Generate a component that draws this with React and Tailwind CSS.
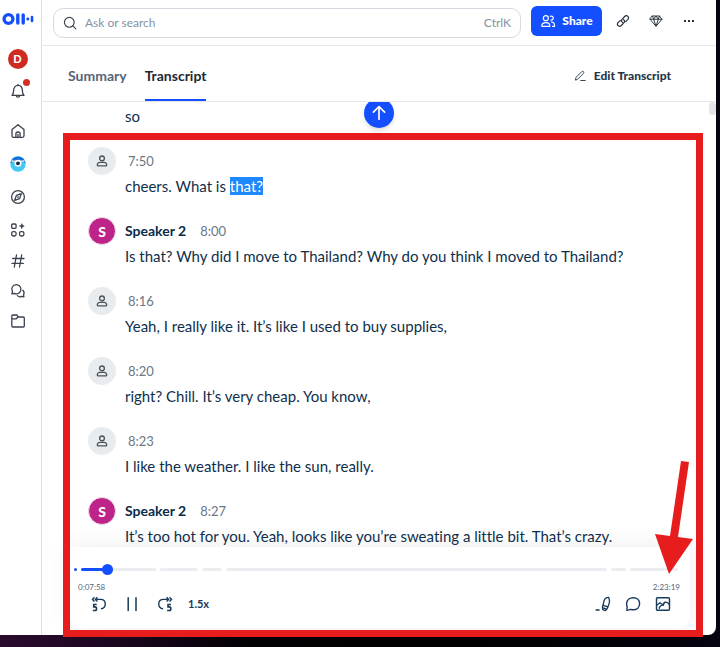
import React, { useState } from 'react';
import clsx from 'clsx';

const segments = [
    { time: '7:50', before: 'cheers. What is ', selected: 'that?' },
    { time: '8:00', speaker: 'Speaker 2', before: 'Is that? Why did I move to Thailand? Why do you think I moved to Thailand?' },
    { time: '8:16', before: 'Yeah, I really like it. It’s like I used to buy supplies,' },
    { time: '8:20', before: 'right? Chill. It’s very cheap. You know,' },
    { time: '8:23', before: 'I like the weather. I like the sun, really.' },
    { time: '8:27', speaker: 'Speaker 2', before: 'It’s too hot for you. Yeah, looks like you’re sweating a little bit. That’s crazy.' },
];

// Track chapters, sized in proportion to their length
const chapters = [75, 38, 20, 382, 15, 48];

const Icon = ({ size = 16, width = 1.3, children }) => (
    <svg
        width={size}
        height={size}
        viewBox="0 0 16 16"
        fill="none"
        stroke="currentColor"
        strokeWidth={width}
        strokeLinecap="round"
        strokeLinejoin="round"
        aria-hidden="true"
    >
        {children}
    </svg>
);

const Logo = () => (
    <svg width="32" height="14" viewBox="0 0 32 14" fill="none" stroke="#144fff" strokeLinecap="round" aria-hidden="true">
        <circle cx="6.5" cy="7" r="4.4" strokeWidth="3.4" />
        <path d="M15.8 3v8M21.2 3v8" strokeWidth="3.4" />
        <path d="M25.8 6.8v.4" strokeWidth="2.8" />
        <path d="M30 5v4" strokeWidth="2.6" />
    </svg>
);

const BellIcon = () => (
    <Icon>
        <path d="M2 12.3c1.2-1 1.6-2.3 1.6-4.6C3.6 4.5 5.4 2.3 8 2.3s4.4 2.2 4.4 5.4c0 2.3.4 3.6 1.6 4.6z" />
        <path d="M6.2 12.6c.2 1 .9 1.6 1.8 1.6s1.6-.6 1.8-1.6M8 1.5v.8" />
    </Icon>
);

const HomeIcon = () => (
    <Icon>
        <path d="M2 6.6 8 1.7l6 4.9v6.2c0 .9-.6 1.5-1.5 1.5h-9c-.9 0-1.5-.6-1.5-1.5z" />
        <path d="M5.9 14.2V11c0-1.2.8-2 2.1-2s2.1.8 2.1 2v3.2M8 11.5v2.7" />
    </Icon>
);

const OwlIcon = () => (
    <svg width="16" height="16" viewBox="0 0 16 16" aria-hidden="true">
        <circle cx="8" cy="8" r="7.7" fill="#45c8f3" />
        <path d="M.4 7A7.7 7.7 0 0 1 15.6 7C13 6 11 5 8 5S3 6 .4 7z" fill="#1670d8" />
        <path d="M1.5 4.6c1.5.6 2.7.8 4.1.3M14.5 4.6c-1.5.6-2.7.8-4.1.3" stroke="#fff" strokeWidth="1.2" />
        <circle cx="8" cy="7.3" r="3.5" fill="#fff" />
        <circle cx="8" cy="7.3" r="1.9" fill="#14283f" />
    </svg>
);

const CompassIcon = () => (
    <Icon>
        <circle cx="8" cy="8" r="6.4" />
        <path d="m11.3 4.7-1.7 4.9-4.9 1.7 1.7-4.9zM7.8 8.2l.4-.4" />
    </Icon>
);

const AppsIcon = () => (
    <Icon>
        <rect x="1.7" y="2" width="4.4" height="4.4" rx="1.1" />
        <rect x="1.7" y="9.6" width="4.4" height="4.4" rx="1.7" />
        <rect x="9.5" y="9.6" width="4.4" height="4.4" rx="1.7" />
        <path d="M11.8 2.3v3.6M10 4.1h3.6" strokeWidth="1.5" />
    </Icon>
);

const HashIcon = () => (
    <Icon>
        <path d="M6.5 2 4.3 14M11.7 2 9.5 14M2.7 5.5h11.3M2 10.4h11.3" />
    </Icon>
);

const ChatsIcon = () => (
    <Icon>
        <path d="M6.3 1.7a4.6 4.6 0 1 1-2.1 8.7l-2.3.5.6-2.2A4.5 4.5 0 0 1 6.3 1.7z" />
        <path d="M12.8 7.3a3.7 3.7 0 0 1 .8 4.5l.3 2-2.1-.4a4 4 0 0 1-4.5-.8" />
    </Icon>
);

const FolderIcon = () => (
    <Icon>
        <path d="M1.8 3c0-.6.4-1 1-1h4l1.5 2h5c.6 0 1 .4 1 1v8c0 .6-.4 1-1 1H2.8c-.6 0-1-.4-1-1zM2 5.8h4.2L8 4" />
    </Icon>
);

const SearchIcon = () => (
    <Icon size={14}>
        <circle cx="7.2" cy="7.2" r="5.6" />
        <path d="m11.3 11.3 3.4 3.4" />
    </Icon>
);

const PeopleIcon = () => (
    <Icon width={1.2}>
        <circle cx="5.8" cy="5.2" r="2.5" />
        <path d="M1.8 13.3c-.2-2.4 1.2-3.7 4-3.7s4.2 1.3 4 3.7z" />
        <path d="M10.3 3.3a2 2 0 1 1 .6 3.7M11.2 9c2.4 0 3.6 1.6 3.3 4.3h-2" />
    </Icon>
);

const LinkIcon = () => (
    <Icon size={14} width={1.4}>
        <path d="M7.3 9.5c-1.3-.8-1.5-2.3-.4-3.4l3-3.2c2.6-2.6 6 .9 3.5 3.5L11 8.7" />
        <path d="M8.7 6.5c1.3.8 1.5 2.3.4 3.4l-3 3.2c-2.6 2.6-6-.9-3.5-3.5L5 7.3" />
    </Icon>
);

const DiamondIcon = () => (
    <Icon size={14} width={1.1}>
        <path d="M4 2.3h8L14.8 6 8 14 1.2 6zM1.2 6h13.6M5.4 6 8 14l2.6-8M4 2.3 5.4 6 8 2.3 10.6 6 12 2.3" />
    </Icon>
);

const PencilIcon = () => (
    <Icon size={12} width={1.2}>
        <path d="m2 13 .8-3.3 7.5-7.5c1.6-1.4 3.7.6 2.3 2.3L5 12.2zM9 14h6" />
    </Icon>
);

const PersonIcon = () => (
    <Icon size={14} width={1.5}>
        <circle cx="8" cy="5" r="2.7" />
        <path d="M3.3 13.5c-1.2 0-.8-4 2.2-4h5c3 0 3.4 4 2.2 4z" />
    </Icon>
);

const Back5Icon = () => (
    <svg width="16" height="16" viewBox="0 0 16 16" fill="none" stroke="currentColor" strokeWidth="1.4" aria-hidden="true">
        <path d="M3.5 1.3 1.5 3.4l2 2.1M6.4 1.3l-2 2.1 2 2.1M4.8 3.4h4.7c6.3 0 6.3 9.3.4 9.3" />
        <path d="M5.7 8.5H2.7v2.4h1.2c2.2 0 2.2 3.6 0 3.6H1.8" strokeWidth="1.6" />
    </svg>
);

const Forward5Icon = () => (
    <svg width="16" height="16" viewBox="0 0 16 16" fill="none" stroke="currentColor" strokeWidth="1.4" aria-hidden="true">
        <path d="m12.5 1.3 2 2.1-2 2.1M9.6 1.3l2 2.1-2 2.1M11.2 3.4H6.5c-6.3 0-6.3 9.3-.4 9.3" />
        <path d="M14 8.5h-3v2.4h1.2c2.2 0 2.2 3.6 0 3.6h-2.1" strokeWidth="1.6" />
    </svg>
);

const PauseIcon = () => (
    <Icon width={1.5}>
        <path d="M4.2 1.8v12.6M12 1.8v12.6" />
    </Icon>
);

const HighlightIcon = () => (
    <Icon width={1.3}>
        <path d="M8 9.3 9 5c.6-2.1 2.4-3.5 4.8-3.6.9 2.3.9 4.6.2 6.600l-1.2 2.9z" />
        <path d="M8 9.3c-.9 1.5-.9 2.9-.3 4.3l2.8 1c1.3-.8 2.1-2 2.3-3.7M8 11.8l3 1.1" />
        <path d="M1.2 14h2.8" strokeWidth="1.6" />
    </Icon>
);

const CommentIcon = () => (
    <Icon width={1.4}>
        <path d="M8.3 1.7c3.7 0 6.3 2.5 6.3 5.9 0 3.8-2.7 6.2-6.4 6.2-1 0-1.7-.1-2.6-.5l-3.4 1c-.3.1-.5-.1-.4-.4l.4-3C1.6 9.7 1.5 8.7 1.6 7.5 1.8 4.2 4.6 1.7 8.3 1.7z" />
    </Icon>
);

const ImageIcon = () => (
    <Icon width={1.4}>
        <rect x="1.5" y="1.8" width="13" height="12.4" rx="1" />
        <path d="M1.7 9.3 5 6.7l3.3 2.5c.2-3.5 3.8-4.3 6-.6M4.3 12.2c.4-2.3 2.6-3.3 4-3" />
    </Icon>
);

const IconButton = ({ label, className, children }) => (
    <button type="button" aria-label={label} className={clsx('flex size-5 shrink-0 items-center justify-center', className)}>
        {children}
    </button>
);

const Sidebar = () => (
    <nav className="flex w-[42px] shrink-0 flex-col items-center border-r border-[#dcdfe3] pt-3 pr-[6px] text-[#39424e]">
        <a href="#home" aria-label="Home page"><Logo /></a>
        <button type="button" className="mt-[23px] size-5 rounded-full bg-[#cf2a20] text-[11px] font-black text-white">D</button>
        <IconButton label="Notifications" className="relative mt-3">
            <BellIcon />
            <span className="absolute -top-[2px] -right-[2px] size-[7px] rounded-full bg-[#d32f25]" />
        </IconButton>
        <div className="mt-5 flex flex-col gap-[13px]">
            <IconButton label="Home"><HomeIcon /></IconButton>
            <IconButton label="Assistant"><OwlIcon /></IconButton>
            <IconButton label="Explore"><CompassIcon /></IconButton>
            <IconButton label="Apps"><AppsIcon /></IconButton>
        </div>
        <div className="mt-[11px] flex flex-col gap-[10px]">
            <IconButton label="Channels"><HashIcon /></IconButton>
            <IconButton label="Messages"><ChatsIcon /></IconButton>
            <IconButton label="Folders"><FolderIcon /></IconButton>
        </div>
    </nav>
);

const Header = () => (
    <header className="flex h-[46px] shrink-0 items-center border-b border-[#e6e8eb] pr-[17px] pl-[11px]">
        <div className="flex h-[30px] min-w-0 flex-1 items-center rounded-[10px] border border-[#d5dae2] px-[9px] text-[#39424e]">
            <label htmlFor="search" aria-label="Search"><SearchIcon /></label>
            <input
                id="search"
                type="text"
                aria-label="Search"
                placeholder="Ask or search"
                className="ml-2 h-6 min-w-0 flex-1 text-[12px] leading-6 outline-none placeholder:text-[#8592a3]"
            />
            <kbd className="font-[Lato,sans-serif] text-[12px] text-[#8592a3]">CtrlK</kbd>
        </div>
        <div className="flex items-center pb-1 pl-[10px] text-[#2a333d]">
            <button type="button" className="mr-[11px] flex h-[30px] w-[71px] items-center justify-center gap-[6px] rounded-md bg-[#144fff] text-[12px] font-black text-white">
                <PeopleIcon /> Share
            </button>
            <div className="flex gap-[13px]">
                <IconButton label="Copy link"><LinkIcon /></IconButton>
                <IconButton label="Upgrade"><DiamondIcon /></IconButton>
                <IconButton label="More">
                    <svg width="10" height="2" viewBox="0 0 10 2" fill="currentColor" aria-hidden="true">
                        <rect width="2" height="2" /><rect x="4" width="2" height="2" /><rect x="8" width="2" height="2" />
                    </svg>
                </IconButton>
            </div>
        </div>
    </header>
);

const Tabs = ({ tab, setTab }) => (
    <div className="flex h-14 shrink-0 items-stretch border-b border-[#e6e8eb] pr-[45px] pl-[26px]">
        <div role="tablist" className="flex gap-[18px]">
            {['Summary', 'Transcript'].map((name) => (
                <button
                    key={name}
                    type="button"
                    role="tab"
                    aria-selected={tab === name}
                    onClick={() => setTab(name)}
                    className={clsx(
                        'border-y-2 border-t-transparent pt-1 text-[14px] font-bold',
                        tab === name ? 'border-b-[#144fff] text-[#1d2733]' : 'border-b-transparent text-[#56657a]'
                    )}
                >
                    {name}
                </button>
            ))}
        </div>
        <button type="button" className="ml-auto flex items-center gap-2 pt-1 text-[12px] font-black text-[#253648]">
            <PencilIcon /> Edit Transcript
        </button>
    </div>
);

const Segment = ({ segment }) => (
    <li className="flex gap-[9px]">
        {segment.speaker ? (
            <span className="flex size-7 shrink-0 items-center justify-center rounded-full border border-[#eadce6] bg-[#bd2389] text-[14px] font-black text-white">S</span>
        ) : (
            <span className="flex size-7 shrink-0 items-center justify-center rounded-full bg-[#e9ecef] text-[#4a525c]"><PersonIcon /></span>
        )}
        <div className="min-w-0">
            <div className="flex h-7 items-baseline gap-[14px] leading-7">
                {segment.speaker && <span className="text-[14px] font-bold text-[#0b2b48]">{segment.speaker}</span>}
                <time className={clsx('text-[13px] text-[#6b7684]', !segment.speaker && 'pl-[3px]')}>{segment.time}</time>
            </div>
            <p className="text-[15px] leading-[22px] text-[#0f2f4c]">
                {segment.before}
                {segment.selected && <mark className="bg-[#1e88ff] text-white">{segment.selected}</mark>}
            </p>
        </div>
    </li>
);

const Player = () => (
    <section aria-label="Player" className="mr-[26px] mb-[7px] ml-7 h-[81px] shrink-0 rounded-b-xl bg-white pt-4 shadow-[0_0_24px_rgba(20,30,50,0.08)]">
        <div className="mr-[12px] ml-[4px] flex h-3 items-center gap-1">
            <span className="size-[3px] rounded-full bg-[#144fff]" />
            {chapters.map((length, i) => (
                <div key={i} className="h-[3px] rounded-full bg-[#ebedf1]" style={{ flexGrow: length, flexBasis: 0 }}>
                    {i === 0 && (
                        <div className="flex h-full w-8 items-center justify-end rounded-full bg-[#144fff]">
                            <span className="size-[11px] shrink-0 rounded-full bg-[#144fff]" />
                        </div>
                    )}
                </div>
            ))}
        </div>
        <div className="mt-2 mr-[10px] ml-2 flex h-2 items-center justify-between text-[8px] text-[#52657a]">
            <span>0:07:58</span>
            <span>2:23:19</span>
        </div>
        <div className="mt-[3px] flex items-center pr-[17px] pl-[19px] text-[#183a5a]">
            <div className="flex items-center gap-[13px]">
                <IconButton label="Back 5 seconds"><Back5Icon /></IconButton>
                <IconButton label="Pause"><PauseIcon /></IconButton>
                <IconButton label="Forward 5 seconds"><Forward5Icon /></IconButton>
                <button type="button" className="text-[11px] font-bold">1.5x</button>
            </div>
            <div className="ml-auto flex gap-[10px]">
                <IconButton label="Highlight"><HighlightIcon /></IconButton>
                <IconButton label="Comment"><CommentIcon /></IconButton>
                <IconButton label="Add image"><ImageIcon /></IconButton>
            </div>
        </div>
    </section>
);

const Annotations = () => (
    <div className="pointer-events-none absolute top-[133px] right-[17px] bottom-[10px] left-[63px] border-[7px] border-[#e71d1d]">
        <svg width="38" height="113" viewBox="0 0 38 113" fill="#e71d1d" className="absolute right-[3px] bottom-[56px]" aria-hidden="true">
            <path d="m26 0 8 1-11 75 15 2-24 35L0 73l15 2z" />
        </svg>
    </div>
);

const App = () => {
    const [tab, setTab] = useState('Transcript');

    return (
        <div className="relative flex min-h-screen flex-col bg-[linear-gradient(to_right,#2a0b2e,#1d0822_15%,#020104_35%,#000_60%,#05040f)] pr-1 pb-3 font-[Lato,sans-serif] [font-variant-ligatures:none]">
            <div className="flex flex-1 rounded-br-lg bg-white">
                <Sidebar />
                <div className="flex min-w-0 flex-1 flex-col">
                    <Header />
                    <Tabs tab={tab} setTab={setTab} />
                    <main className="relative flex-1 overflow-hidden pt-[3px] pr-7 pl-[46px]">
                        <p className="mb-5 pl-[37px] text-[15px] leading-[22px] text-[#0f2f4c]">so</p>
                        <ol className="flex flex-col gap-5">
                            {segments.map((segment) => <Segment key={segment.time} segment={segment} />)}
                        </ol>
                        <button
                            type="button"
                            aria-label="Back to current position"
                            className="absolute -top-1 left-1/2 flex size-[30px] -translate-x-1/2 items-center justify-center rounded-full bg-[#144fff] text-white shadow-md"
                        >
                            <Icon size={18} width={1.5}><path d="M8 13.5v-11M3 7.3l5-5 5 5" /></Icon>
                        </button>
                        <span className="absolute top-0 right-0 h-[13px] w-[7px] rounded-sm bg-[#e3e4e6]" />
                    </main>
                    <Player />
                </div>
            </div>
            <Annotations />
        </div>
    );
};

export default App;
